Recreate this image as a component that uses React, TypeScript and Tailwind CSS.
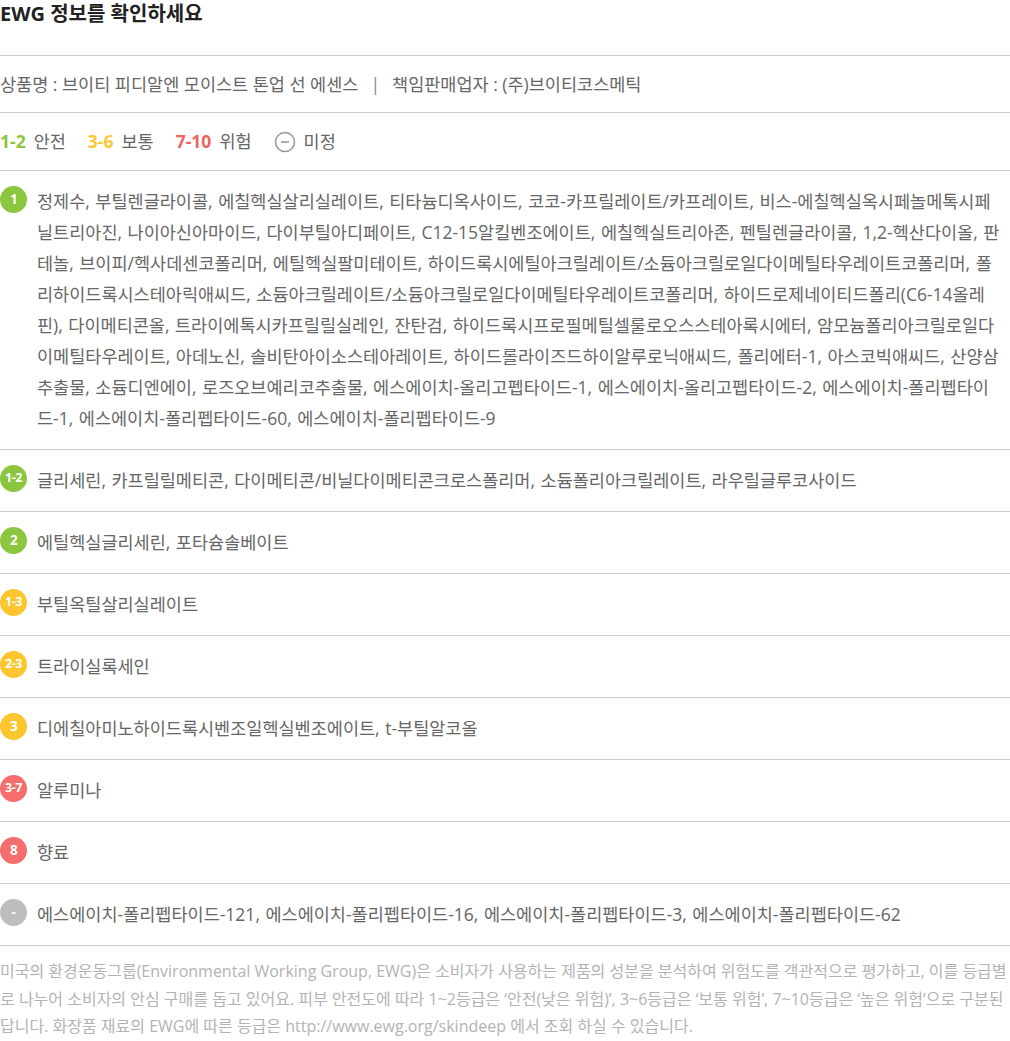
import React from "react";

type Grade = {
  label: string;
  color: string;
  lines: string[];
};

const grades: Grade[] = [
  {
    label: "1",
    color: "bg-[#8cc63f]",
    lines: [
      "정제수, 부틸렌글라이콜, 에칠헥실살리실레이트, 티타늄디옥사이드, 코코-카프릴레이트/카프레이트, 비스-에칠헥실옥시페놀메톡시페",
      "닐트리아진, 나이아신아마이드, 다이부틸아디페이트, C12-15알킬벤조에이트, 에칠헥실트리아존, 펜틸렌글라이콜, 1,2-헥산다이올, 판",
      "테놀, 브이피/헥사데센코폴리머, 에틸헥실팔미테이트, 하이드록시에틸아크릴레이트/소듐아크릴로일다이메틸타우레이트코폴리머, 폴",
      "리하이드록시스테아릭애씨드, 소듐아크릴레이트/소듐아크릴로일다이메틸타우레이트코폴리머, 하이드로제네이티드폴리(C6-14올레",
      "핀), 다이메티콘올, 트라이에톡시카프릴릴실레인, 잔탄검, 하이드록시프로필메틸셀룰로오스스테아록시에터, 암모늄폴리아크릴로일다",
      "이메틸타우레이트, 아데노신, 솔비탄아이소스테아레이트, 하이드롤라이즈드하이알루로닉애씨드, 폴리에터-1, 아스코빅애씨드, 산양삼",
      "추출물, 소듐디엔에이, 로즈오브예리코추출물, 에스에이치-올리고펩타이드-1, 에스에이치-올리고펩타이드-2, 에스에이치-폴리펩타이",
      "드-1, 에스에이치-폴리펩타이드-60, 에스에이치-폴리펩타이드-9",
    ],
  },
  {
    label: "1-2",
    color: "bg-[#8cc63f]",
    lines: ["글리세린, 카프릴릴메티콘, 다이메티콘/비닐다이메티콘크로스폴리머, 소듐폴리아크릴레이트, 라우릴글루코사이드"],
  },
  { label: "2", color: "bg-[#8cc63f]", lines: ["에틸헥실글리세린, 포타슘솔베이트"] },
  { label: "1-3", color: "bg-[#fdc62f]", lines: ["부틸옥틸살리실레이트"] },
  { label: "2-3", color: "bg-[#fdc62f]", lines: ["트라이실록세인"] },
  { label: "3", color: "bg-[#fdc62f]", lines: ["디에칠아미노하이드록시벤조일헥실벤조에이트, t-부틸알코올"] },
  { label: "3-7", color: "bg-[#f56d6d]", lines: ["알루미나"] },
  { label: "8", color: "bg-[#f56d6d]", lines: ["향료"] },
  {
    label: "-",
    color: "bg-[#bdbdbd]",
    lines: ["에스에이치-폴리펩타이드-121, 에스에이치-폴리펩타이드-16, 에스에이치-폴리펩타이드-3, 에스에이치-폴리펩타이드-62"],
  },
];

const footerLines = [
  "미국의 환경운동그룹(Environmental Working Group, EWG)은 소비자가 사용하는 제품의 성분을 분석하여 위험도를 객관적으로 평가하고, 이를 등급별",
  "로 나누어 소비자의 안심 구매를 돕고 있어요. 피부 안전도에 따라 1~2등급은 ‘안전(낮은 위험)’, 3~6등급은 ‘보통 위험’, 7~10등급은 ‘높은 위험’으로 구분된",
  "답니다. 화장품 재료의 EWG에 따른 등급은 http://www.ewg.org/skindeep 에서 조회 하실 수 있습니다.",
];

const Badge = ({ label, color }: { label: string; color: string }) => (
  <span
    className={`${color} shrink-0 w-[27px] h-[27px] rounded-full flex items-center justify-center text-white font-bold tracking-[-0.5px] ${
      label.length > 1 ? "text-[12.5px]" : "text-[13.5px]"
    }`}
  >
    {label}
  </span>
);

export default function App() {
  return (
    <div
      className="w-[1010px] bg-white text-[#666]"
      style={{ fontFamily: '"Open Sans", "Noto Sans CJK KR", sans-serif' }}
    >
      <div className="h-[55px] pt-[1px]">
        <h2 className="text-[20px] font-bold text-[#222] leading-[26px]">EWG 정보를 확인하세요</h2>
      </div>

      <div className="h-[57px] border-t border-[#cccccc] flex items-center text-[17.5px]">
        <span>상품명 : 브이티 피디알엔 모이스트 톤업 선 에센스</span>
        <span className="mx-[12px] text-[#888]">|</span>
        <span>책임판매업자 : (주)브이티코스메틱</span>
      </div>

      <div className="h-[58px] border-t border-[#cccccc] flex items-center text-[17.5px]">
        <span className="font-bold text-[#8cc63f] mr-[8px]">1-2</span>
        <span className="mr-[22px]">안전</span>
        <span className="font-bold text-[#fdc62f] mr-[8px]">3-6</span>
        <span className="mr-[22px]">보통</span>
        <span className="font-bold text-[#f06363] mr-[8px]">7-10</span>
        <span className="mr-[22px]">위험</span>
        <svg width="22" height="22" viewBox="0 0 22 22" className="mr-[8px]">
          <circle cx="11" cy="11" r="9.5" fill="none" stroke="#9a9a9a" strokeWidth="1.6" />
          <line x1="7" y1="11" x2="15" y2="11" stroke="#9a9a9a" strokeWidth="1.6" />
        </svg>
        <span>미정</span>
      </div>

      {grades.map((g) => (
        <div key={g.label} className="border-t border-[#cccccc] py-[15px] flex gap-[10px] items-start">
          <Badge label={g.label} color={g.color} />
          <p className="text-[17.5px] leading-[31px] [word-spacing:1px]">
            {g.lines.map((line, i) => (
              <React.Fragment key={i}>
                {i > 0 && <br />}
                {line}
              </React.Fragment>
            ))}
          </p>
        </div>
      ))}

      <div className="border-t border-[#cccccc] pt-[12px] text-[16px] leading-[27.5px] text-[#b3b3b3]">
        {footerLines.map((line, i) => (
          <React.Fragment key={i}>
            {i > 0 && <br />}
            {line}
          </React.Fragment>
        ))}
      </div>
    </div>
  );
}
